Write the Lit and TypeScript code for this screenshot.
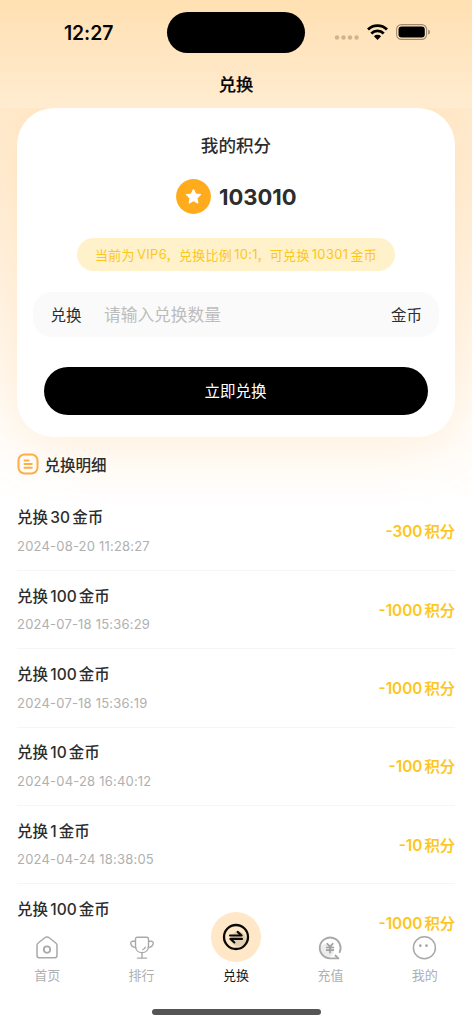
import { LitElement, html, css, svg } from "lit";
import { customElement } from "lit/decorators.js";

interface ExchangeRecord {
  coins: number;
  time: string;
  points: number;
}

const records: ExchangeRecord[] = [
  { coins: 30, time: "2024-08-20 11:28:27", points: 300 },
  { coins: 100, time: "2024-07-18 15:36:29", points: 1000 },
  { coins: 100, time: "2024-07-18 15:36:19", points: 1000 },
  { coins: 10, time: "2024-04-28 16:40:12", points: 100 },
  { coins: 1, time: "2024-04-24 18:38:05", points: 10 },
  { coins: 100, time: "", points: 1000 },
];

const homeIcon = svg`<svg width="24" height="26" viewBox="0 0 24 26" fill="none" stroke="#a9a9a9" stroke-width="1.5" stroke-linejoin="round">
  <path d="M2 10.400c0-1 .4-1.800 1.200-2.400l6.300-5c1.500-1.200 3.500-1.200 5 0l6.300 5c.8.600 1.200 1.400 1.200 2.400v9.800c0 1.700-1 2.600-2.600 2.600H4.600C3 22.800 2 21.900 2 20.200z"/>
  <circle cx="12" cy="14.600" r="3.200" stroke-width="1.800"/></svg>`;

const trophyIcon = svg`<svg width="26" height="26" viewBox="0 0 26 26" fill="none" stroke="#a9a9a9" stroke-width="1.4" stroke-linecap="round" stroke-linejoin="round">
  <path d="M6.500 4.200c0-1.300.6-1.900 1.900-1.900h9.200c1.300 0 1.900.6 1.900 1.900v6.700c0 3.900-2.700 6.700-6.500 6.700s-6.500-2.800-6.500-6.700z"/>
  <path d="M6.300 6.200H4C2.300 6.200 1.500 7.200 1.800 8.700c.5 2.500 2.100 3.700 4.900 3.900M19.700 6.200H22c1.700 0 2.500 1 2.200 2.500-.5 2.500-2.100 3.700-4.900 3.900M13 17.600v5.400M8.500 23.100h9M13.800 14.600c1.400-.3 2.200-1.100 2.500-2.500"/></svg>`;

const swapIcon = svg`<svg width="28" height="28" viewBox="0 0 28 28" fill="none">
  <circle cx="16.500" cy="16" r="7.500" fill="#e3cfb3"/>
  <circle cx="14" cy="14" r="12" stroke="#0b0906" stroke-width="2.300"/>
  <path d="M8 12.500h11.600l-4-3.600M20 15.900H8.400l4 3.600" stroke="#0b0906" stroke-width="2.100" stroke-linecap="round" stroke-linejoin="round"/></svg>`;

const rechargeIcon = svg`<svg width="26" height="26" viewBox="0 0 26 26" fill="none">
  <circle cx="10" cy="15.500" r="7" fill="#ececec"/>
  <path d="M22.700 17.200A10.400 10.400 0 1 0 13 23.400h8.400l-3-2.900" stroke="#a9a9a9" stroke-width="1.900" stroke-linecap="round" stroke-linejoin="round"/>
  <path d="M9.800 8.200l3.200 3.700 3.200-3.700M9 12.500h8M9 15.200h8M13 12v6.200" stroke="#a0a0a0" stroke-width="1.700"/></svg>`;

const faceIcon = svg`<svg width="26" height="26" viewBox="0 0 26 26" fill="none">
  <circle cx="12.400" cy="12.800" r="11" stroke="#a9a9a9" stroke-width="1.500"/>
  <circle cx="8.300" cy="10.700" r="1.400" fill="#a9a9a9"/><circle cx="14.500" cy="10.700" r="1.400" fill="#a9a9a9"/></svg>`;

@customElement("app-root")
export class AppRoot extends LitElement {
  static styles = css`
    :host {
      display: flex;
      flex-direction: column;
      height: 1024px;
      overflow: hidden;
      background: linear-gradient(#ffe1b3 0, #ffeacd 107px, #fffdfa 420px, #fff 520px);
      color: #2d2d2d;
      font-family: Inter, "Noto Sans CJK SC", sans-serif;
      font-size: 15.500px;
      white-space: nowrap;
    }
    * { box-sizing: border-box; }
    svg { display: block; flex: none; }
    .header {
      flex: none;
      height: 107.500px;
      position: relative;
      z-index: 1;
      background: linear-gradient(#ffe0b2, #ffecd1);
      color: #050505;
    }
    .status {
      height: 65px;
      display: grid;
      grid-template-columns: 167px 138px 1fr;
      align-items: center;
    }
    .time { padding-left: 64px; font-size: 19.400px; font-weight: 600; letter-spacing: -0.100px; }
    .island { height: 40.500px; border-radius: 21px; background: #000; }
    .signals { display: flex; align-items: center; padding-left: 29px; }
    .dots { margin-top: -2px; }
    .wifi { margin: -2px 0 0 7px; }
    .battery { margin: -2px 0 0 8px; }
    .title { text-align: center; font-size: 17.300px; line-height: 39px; font-weight: 500; -webkit-text-stroke: 0.200px #050505; }
    .card {
      flex: none;
      height: 329px;
      margin: 0 17px;
      border-radius: 37px;
      background: #fff;
      box-shadow: 0 8px 58px rgba(255, 176, 77, 0.200);
      display: flex;
      flex-direction: column;
      align-items: center;
    }
    .card-title { flex: none; margin-top: 25.500px; height: 26px; line-height: 26px; font-size: 17.600px; font-weight: 500; }
    .balance { flex: none; display: flex; align-items: center; gap: 7.500px; margin: 19.500px 0 0 1px; height: 36px; font-size: 22px; font-weight: 700; }
    .ratio {
      flex: none;
      margin-top: 23px;
      width: 318.500px;
      height: 33px;
      border-radius: 17px;
      display: flex;
      align-items: center;
      justify-content: center;
      background: #fff2cb;
      color: #fdc61b;
      font-size: 13px;
      letter-spacing: 0.320px;
    }
    .ratio .num { margin: 0 2px; }
    .ratio .before-comma { margin-right: -1.500px; }
    .field {
      flex: none;
      margin-top: 21.500px;
      width: 406px;
      height: 44.500px;
      border-radius: 19px;
      background: #fafafa;
      display: flex;
      align-items: center;
      padding: 0 17px 0 17.500px;
    }
    .hint { flex: 1; margin-left: 22.500px; font-size: 16.700px; color: #bdbdbd; }
    .submit {
      flex: none;
      margin: 30px 0 0;
      padding: 0 1px 1px 0;
      border: 0;
      width: 384px;
      height: 48.500px;
      border-radius: 25px;
      background: #000;
      color: #fff;
      font: inherit;
    }
    .section { flex: none; display: flex; align-items: center; gap: 5.500px; height: 24px; margin: 15.500px 17px 0; font-weight: 500; }
    .section-label { margin-top: -1px; }
    .list { flex: 1; min-height: 0; margin: 16.500px 17px 0; }
    .row {
      height: 78.350px;
      border-bottom: 1px solid #f5f5f5;
      display: flex;
      justify-content: space-between;
      align-items: center;
    }
    .row:last-child { border-color: transparent; }
    .name { font-weight: 500; line-height: 24px; }
    .date { color: #b0b0b0; font-size: 13px; height: 20px; line-height: 20px; margin-top: 5.500px; letter-spacing: 0.200px; }
    .num { margin: 0 2.200px; }
    .amount { color: #fec51b; font-weight: 600; font-size: 15.300px; margin-top: -2px; }
    .unit { margin-left: 2px; font-weight: 500; -webkit-text-stroke: 0.200px #fec51b; }
    .tabs {
      flex: none;
      height: 93px;
      display: flex;
      flex-direction: column;
      align-items: center;
      position: relative;
    }
    .tab-row { width: 100%; display: grid; grid-template-columns: repeat(5, 1fr); height: 78px; }
    .tab { display: flex; flex-direction: column; align-items: center; color: #afafaf; font-size: 13px; }
    .glyph { height: 33px; display: flex; align-items: center; }
    .label { line-height: 20px; margin-top: 0.500px; }
    .current { color: #1a1a1a; }
    .bubble {
      width: 50px;
      height: 50px;
      margin: -19.500px 0 2.500px;
      border-radius: 50%;
      background: #ffe7c7;
      display: grid;
      place-items: center;
    }
    .home-bar { width: 169px; height: 5.500px; border-radius: 3px; background: #555; }
  `;

  private tab(icon: unknown, label: string) {
    return html`<div class="tab"><span class="glyph">${icon}</span><span class="label">${label}</span></div>`;
  }

  render() {
    return html`
      <header class="header">
        <div class="status">
          <span class="time">12:27</span>
          <span class="island"></span>
          <span class="signals">
            <svg class="dots" width="26" height="22" viewBox="0 0 26 22" fill="#cdb58f">
              <circle cx="3" cy="16.500" r="2.200"/><circle cx="9.500" cy="16.500" r="2.200"/><circle cx="16" cy="16.500" r="2.200"/><circle cx="22.600" cy="16.500" r="2.200"/>
            </svg>
            <svg class="wifi" width="21" height="16" viewBox="0 0 21 16" fill="none" stroke="#000" stroke-width="2.800">
              <path d="M1 5.500a13.600 13.600 0 0 1 19 0"/><path d="M4.300 9.400a8.900 8.900 0 0 1 12.400 0"/>
              <path d="M10.500 15.900l-3.600-3.600a5.100 5.100 0 0 1 7.200 0z" fill="#000" stroke="none"/>
            </svg>
            <svg class="battery" width="35" height="16" viewBox="0 0 35 16">
              <rect x=".6" y=".6" width="30" height="14.800" rx="4.800" fill="none" stroke="#9f8c70" stroke-width="1.100"/>
              <rect x="2.500" y="2.600" width="26.300" height="10.800" rx="3.200" fill="#000"/>
              <path d="M32.200 5.400c2.400.9 2.400 4.300 0 5.200z" fill="#9f8c70"/>
            </svg>
          </span>
        </div>
        <div class="title">兑换</div>
      </header>

      <section class="card">
        <div class="card-title">我的积分</div>
        <div class="balance">
          <svg width="35" height="35" viewBox="0 0 35 35">
            <circle cx="17.500" cy="17.500" r="17.400" fill="#ffab1b"/>
            <path d="M17.500 10.500l2.100 4.500 4.900.6-3.600 3.400.9 4.900-4.300-2.400-4.300 2.400.9-4.900-3.600-3.400 4.900-.6z" fill="#fff" stroke="#fff" stroke-width="1.200" stroke-linejoin="round"/>
          </svg>
          <span>103010</span>
        </div>
        <div class="ratio">当前为<span class="num before-comma">VIP6</span>，兑换比例<span class="num before-comma">10:1</span>，可兑换<span class="num">10301</span>金币</div>
        <div class="field"><span>兑换</span><span class="hint">请输入兑换数量</span><span>金币</span></div>
        <button class="submit">立即兑换</button>
      </section>

      <div class="section">
        <svg width="22" height="22" viewBox="0 0 22 22" fill="none" stroke="#ffae45" stroke-width="2" stroke-linecap="round">
          <rect x="1.500" y="1.500" width="19" height="19" rx="6"/>
          <path d="M7.500 7.500h4M7.500 11h7.300M7.500 14.700h7.300"/>
        </svg>
        <span class="section-label">兑换明细</span>
      </div>

      <div class="list">
        ${records.map(
          (r) => html`<div class="row">
            <div>
              <div class="name">兑换<span class="num">${r.coins}</span>金币</div>
              <div class="date">${r.time}</div>
            </div>
            <div class="amount">-${r.points}<span class="unit">积分</span></div>
          </div>`,
        )}
      </div>

      <nav class="tabs">
        <div class="tab-row">
          ${this.tab(homeIcon, "首页")}
          ${this.tab(trophyIcon, "排行")}
          <div class="tab current"><span class="bubble">${swapIcon}</span><span class="label">兑换</span></div>
          ${this.tab(rechargeIcon, "充值")}
          ${this.tab(faceIcon, "我的")}
        </div>
        <div class="home-bar"></div>
      </nav>
    `;
  }
}
